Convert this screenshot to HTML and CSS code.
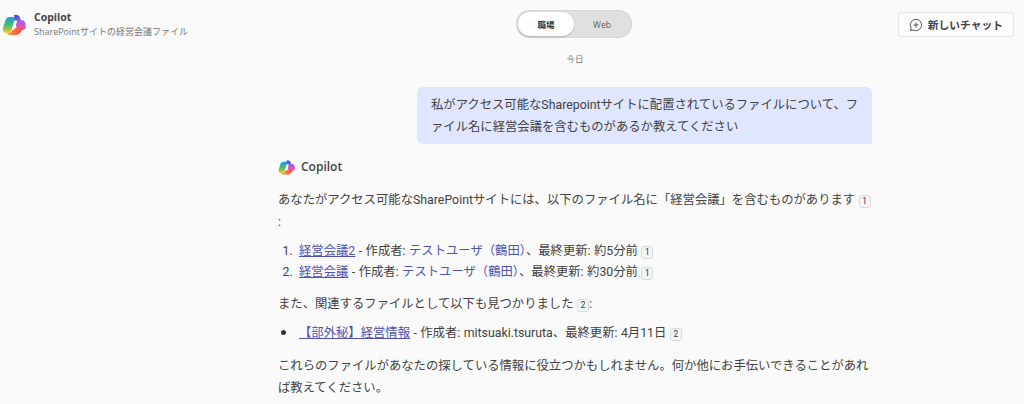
FILE: index.html
```html
<!DOCTYPE html>
<html lang="ja">
  <head>
    <meta charset="UTF-8" />
    <title>Copilot</title>
    <link rel="stylesheet" href="styles.css">
  </head>
  <body>
    <header class="top-bar">
      <div class="title-block">
        <svg class="logo logo-large" viewBox="0 0 24 24"><use href="#copilot-logo"></use></svg>
        <div>
          <div class="app-name">Copilot</div>
          <div class="chat-name">SharePointサイトの経営会議ファイル</div>
        </div>
      </div>
      <div class="toggle">
        <span class="toggle-item toggle-active">職場</span>
        <span class="toggle-item">Web</span>
      </div>
      <button class="new-chat">
        <svg class="new-chat-icon" viewBox="0 0 16 16">
          <path d="M8 1.5a6.500 6.500 0 1 1-3.200 12.200L1.700 14.500l.8-3A6.500 6.500 0 0 1 8 1.500Z" />
          <path d="M8 5v6M5 8h6" />
        </svg>
        新しいチャット
      </button>
    </header>

    <main class="thread">
      <div class="date">今日</div>
      <div class="user-message">
        私がアクセス可能なSharepointサイトに配置されているファイルについて、ファイル名に経営会議を含むものがあるか教えてください
      </div>
      <div class="answer">
        <div class="answer-head">
          <svg class="logo" viewBox="0 0 24 24"><use href="#copilot-logo"></use></svg>
          Copilot
        </div>
        <p>あなたがアクセス可能なSharePointサイトには、以下のファイル名に「経営会議」を含むものがあります <span class="cite">1</span> :</p>
        <ol>
          <li><a href="#">経営会議2</a> - 作成者: <span class="person">テストユーザ（鶴田）</span>、最終更新: 約5分前 <span class="cite">1</span></li>
          <li><a href="#">経営会議</a> - 作成者: <span class="person">テストユーザ（鶴田）</span>、最終更新: 約30分前 <span class="cite">1</span></li>
        </ol>
        <p>また、関連するファイルとして以下も見つかりました <span class="cite">2</span>:</p>
        <ul>
          <li><a href="#">【部外秘】経営情報</a> - 作成者: mitsuaki.tsuruta、最終更新: 4月11日 <span class="cite">2</span></li>
        </ul>
        <p>これらのファイルがあなたの探している情報に役立つかもしれません。何か他にお手伝いできることがあれば教えてください。</p>
      </div>
    </main>

    <svg class="sprite" width="0" height="0">
      <defs>
        <linearGradient id="logo-a" x1="0" y1="0" x2="0" y2="1">
          <stop offset="0" stop-color="#1f9be0" />
          <stop offset="0.5" stop-color="#3fc070" />
          <stop offset="1" stop-color="#fbc820" />
        </linearGradient>
        <linearGradient id="logo-b" x1="0" y1="0" x2="0" y2="1">
          <stop offset="0" stop-color="#1e4fd8" />
          <stop offset="0.45" stop-color="#b45ce6" />
          <stop offset="1" stop-color="#f0588c" />
        </linearGradient>
        <linearGradient id="logo-c" x1="0" y1="0" x2="1" y2="0">
          <stop offset="0" stop-color="#fb9c2c" />
          <stop offset="1" stop-color="#f2475f" />
        </linearGradient>
        <symbol id="copilot-logo" viewBox="0 0 24 24">
          <path fill="url(#logo-a)" d="M8 4h5.500L9 18c-.4 1.200-1.300 1.800-2.500 1.800H4C1.500 19.800.3 17.500 1 15L3.500 7C4 5 6 4 8 4Z" />
          <path fill="url(#logo-b)" d="M12 2h2.500c2 0 3 1 3.600 3l.6 2.200H20c2 0 3.200 1.800 3.500 3.500l.3 2.800c.2 2.200-1.300 3.500-3.500 3.500h-5L12.500 9C12 7 13 4 12 2Z" />
          <path fill="url(#logo-c)" d="M10.500 15h9.800c-.3 3.800-3 7-6.300 7H8c-1.500 0-2.700-.8-3-2.200h2c2 0 3-1.300 3.500-4.800Z" />
          <path fill="#fff" d="M14 7.500c.9 0 1.100.6.900 1.300L12.500 16c-.3.800-.8 1-1.500 1-.9 0-1.100-.6-.9-1.300l2.400-7.200c.3-.8.800-1 1.500-1Z" />
        </symbol>
      </defs>
    </svg>
  </body>
</html>
```

FILE: styles.css
```css
* {
  margin: 0;
  padding: 0;
  box-sizing: border-box;
}

body {
  font-family: "Open Sans", "Noto Sans CJK JP", sans-serif;
  background-color: #fafafa;
  color: #424242;
  width: 1024px;
  height: 404px;
  overflow: hidden;
}

.sprite {
  position: absolute;
}

.top-bar {
  display: grid;
  grid-template-columns: 514px auto 1fr;
  align-items: start;
  height: 52px;
  padding: 10px 10px 0 2px;
}

.title-block {
  display: flex;
  align-items: flex-start;
  gap: 8px;
}

.logo {
  width: 17px;
  height: 17px;
  flex: none;
}

.logo-large {
  width: 24px;
  height: 24px;
  margin-top: 3px;
}

.app-name {
  font-size: 10.5px;
  font-weight: 700;
  line-height: 15px;
}

.chat-name {
  font-size: 9px;
  line-height: 14px;
  color: #777;
}

.toggle {
  display: flex;
  width: 116px;
  height: 28px;
  background-color: #e0e0e0;
  border-radius: 14px;
  padding: 2px;
  box-shadow: inset 0 0 0 1px #d6d6d6;
}

.toggle-item {
  flex: 1;
  display: flex;
  align-items: center;
  justify-content: center;
  font-size: 8.5px;
  color: #616161;
}

.toggle-active {
  flex: none;
  width: 56px;
  background-color: #fff;
  border-radius: 12px;
  color: #333;
  font-weight: 700;
  box-shadow: 0 1px 2px rgba(0, 0, 0, 0.2);
}

.new-chat {
  justify-self: end;
  display: flex;
  align-items: center;
  gap: 5px;
  height: 25px;
  margin-top: 2px;
  padding: 0 10px;
  background-color: #fcfcfc;
  border: 1px solid #e6e6e6;
  border-radius: 3px;
  font-family: inherit;
  font-size: 10.75px;
  font-weight: 600;
  color: #424242;
}

.new-chat-icon {
  width: 14px;
  height: 14px;
  fill: none;
  stroke: #424242;
  stroke-width: 1;
}

.thread {
  width: 594px;
  margin-left: 278px;
  font-family: Roboto, "Noto Sans CJK JP", sans-serif;
  font-size: 12.33px;
  word-spacing: 0.4px;
  line-height: 22px;
}

.date {
  font-size: 8.5px;
  line-height: 14px;
  color: #777;
  text-align: center;
  margin-bottom: 21px;
}

.user-message {
  width: 455px;
  height: 57px;
  margin-left: auto;
  padding: 7px 8px 7px 14px;
  background-color: #e0e6ff;
  border-radius: 6px 6px 0 6px;
  line-break: anywhere;
}

.answer {
  margin-top: 13px;
}

.answer-head {
  display: flex;
  align-items: center;
  gap: 6px;
  font-family: "Open Sans", sans-serif;
  font-size: 12px;
  font-weight: 600;
  line-height: 20px;
  margin-bottom: 12px;
}

.answer p {
  margin-bottom: 8px;
}

.answer ol {
  padding-left: 21px;
  margin-bottom: 10px;
}

.answer ul {
  padding-left: 21px;
  margin-bottom: 11px;
  list-style: none;
}

.answer li {
  line-height: 21px;
}

ol li::marker {
  content: counter(list-item) ".\2002";
}

ul li::before {
  content: "";
  display: inline-block;
  width: 5px;
  height: 5px;
  margin: 0 13px 2px -18px;
  background-color: #333;
  border-radius: 50%;
}

a {
  color: #4f52b2;
}

.person {
  color: #4f52b2;
}

.cite {
  display: inline-block;
  width: 12px;
  height: 13px;
  line-height: 11px;
  font-size: 9px;
  text-align: center;
  background-color: #f5f5f5;
  border: 1px solid #dadada;
  border-radius: 3px;
}
```
